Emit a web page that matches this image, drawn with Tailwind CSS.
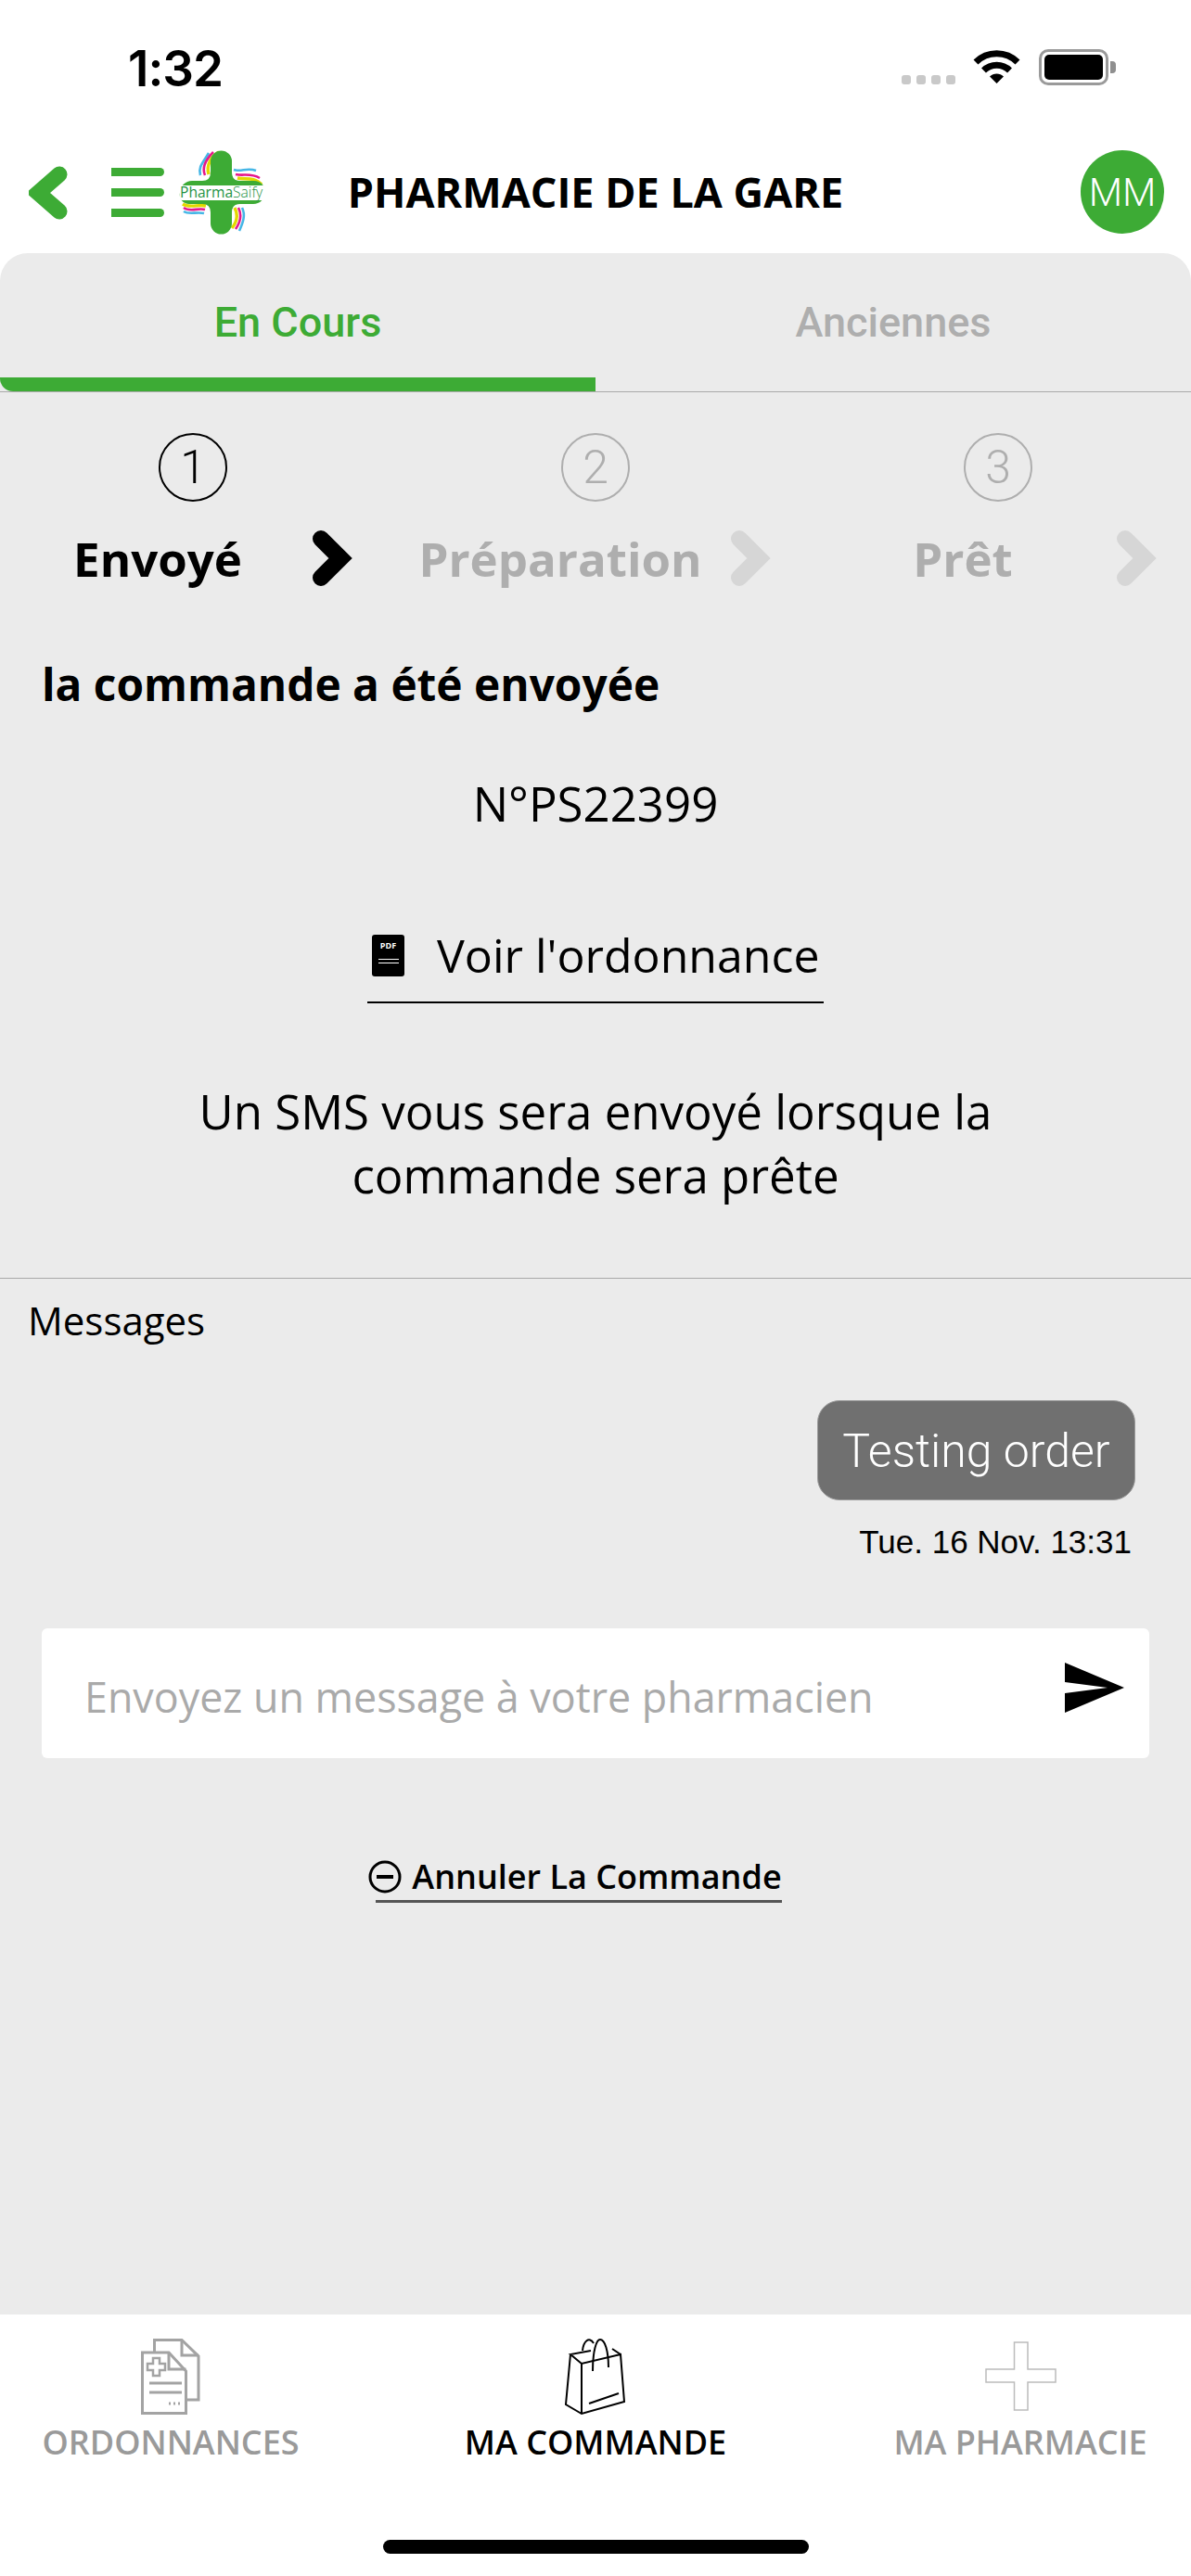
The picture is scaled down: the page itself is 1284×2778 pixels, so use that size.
<!DOCTYPE html>
<html lang="fr">
  <head>
    <meta charset="UTF-8" />
    <meta name="viewport" content="width=device-width, initial-scale=1.0" />
    <title>PharmaSaify - Ma commande</title>
    <script src="https://cdn.jsdelivr.net/npm/@tailwindcss/browser@4"></script>
  </head>
  <body class="bg-white font-['Open_Sans',sans-serif] text-black">
    <div class="flex flex-col w-[1284px] h-[2778px] overflow-hidden">
      <!-- Status bar -->
      <div class="flex items-start justify-between h-[162px] pl-[138px] pr-[81px] pt-[43px] shrink-0">
        <span class="font-['Inter',sans-serif] font-semibold text-[53px] leading-[62px] tracking-[-1px]">1:32</span>
        <div class="flex items-start pt-[10px]">
          <div class="flex gap-[6px] mt-[28px]">
            <span class="w-[10px] h-[10px] rounded-[3px] bg-[#c9c9c9]"></span>
            <span class="w-[10px] h-[10px] rounded-[3px] bg-[#c9c9c9]"></span>
            <span class="w-[10px] h-[10px] rounded-[3px] bg-[#c9c9c9]"></span>
            <span class="w-[10px] h-[10px] rounded-[3px] bg-[#c9c9c9]"></span>
          </div>
          <svg class="ml-[19px]" width="51" height="38" viewBox="0 0 51 38" fill="none" stroke="#000" stroke-width="7">
            <path d="M3 14 A32 32 0 0 1 48 14" />
            <path d="M11.5 23 A20 20 0 0 1 39.5 23" />
            <path d="M18 29.5 L25.5 37 L33 29.5 A10.6 10.6 0 0 0 18 29.5 Z" fill="#000" stroke="none" />
          </svg>
          <div class="flex items-center ml-[20px]">
            <div class="w-[75px] h-[39px] rounded-[10px] border-[3px] border-[#9a9a9a] p-[3px]">
              <div class="w-full h-full rounded-[5px] bg-black"></div>
            </div>
            <span class="w-[6px] h-[13px] ml-[2px] rounded-r-[4px] bg-[#8f8f8f]"></span>
          </div>
        </div>
      </div>

      <!-- Header -->
      <header class="relative flex items-center h-[111px] pl-[31px] shrink-0">
        <svg width="42" height="58" viewBox="0 0 42 58" fill="none" class="-mt-[20px]">
          <path d="M33 9 L10 29 L33 49" stroke="#3dab35" stroke-width="17" stroke-linecap="round" stroke-linejoin="miter" />
        </svg>
        <div class="flex flex-col gap-[13px] w-[57px] ml-[47px] -mt-[20px]">
          <span class="h-[9px] rounded-r-full bg-[#3dab35]"></span>
          <span class="h-[9px] rounded-r-full bg-[#3dab35]"></span>
          <span class="h-[9px] rounded-r-full bg-[#3dab35]"></span>
        </div>
        <svg class="ml-[15px] -mt-[20px]" width="96" height="92" viewBox="0 0 96 92" fill="none">
          <g stroke-width="2.6" fill="none">
            <path d="M24 27 C21 18 28 12 33 3" stroke="#45b6e6" />
            <path d="M29 27 C25 18 31 9 38 2" stroke="#e5178c" />
            <path d="M33 26 C30 16 36 6 44 2" stroke="#e2d900" stroke-width="3.4" />
            <path d="M60 21 C68 24 74 18 84 22" stroke="#45b6e6" />
            <path d="M62 26 C70 28 78 24 88 30" stroke="#e5178c" />
            <path d="M64 30 C72 32 82 28 90 37" stroke="#e2d900" stroke-width="3.4" />
            <path d="M6 66 C12 70 20 66 28 68" stroke="#45b6e6" />
            <path d="M6 62 C12 67 22 62 29 64" stroke="#e5178c" />
            <path d="M5 58 C12 63 22 58 30 60" stroke="#e2d900" stroke-width="3.4" />
            <path d="M69 62 C73 70 70 78 66 87" stroke="#45b6e6" />
            <path d="M65 62 C69 70 67 78 62 85" stroke="#e5178c" />
            <path d="M61 62 C65 70 63 78 58 84" stroke="#e2d900" stroke-width="3.4" />
          </g>
          <path d="M35 12 A11.5 11.5 0 0 1 58 12 V24 Q58 33 67 33 H82 A12 12 0 0 1 94 45 A13 13 0 0 1 81 58 H67 Q58 58 58 67 V79 A11.5 11.5 0 0 1 35 79 V67 Q35 58 26 58 H12 A10 10 0 0 1 2 46 A13 13 0 0 1 15 33 H26 Q35 33 35 24 Z" fill="#3dab35" />
          <rect x="2" y="38" width="92" height="16" rx="2" fill="#fff" />
          <text x="2" y="50.5" font-family="Open Sans" font-size="15.6" fill="#1f9345" font-weight="500">Pharma<tspan font-weight="300">Saify</tspan></text>
        </svg>
        <h1 class="absolute left-0 right-0 top-[15px] text-center text-[45px] leading-[60px] font-bold">PHARMACIE DE LA GARE</h1>
        <div class="absolute left-[1165px] top-0 flex items-center justify-center w-[90px] h-[90px] rounded-full bg-[#3dab35] font-['Roboto',sans-serif] font-light text-[42px] text-white">MM</div>
      </header>

      <!-- Main -->
      <main class="flex-1 flex flex-col bg-[#ebebeb] rounded-t-[30px]">
        <!-- Tabs -->
        <div class="flex h-[150px] border-b border-[#a9a9a9] shrink-0 font-['Roboto',sans-serif] font-medium text-[45px]">
          <div class="flex-1 flex flex-col">
            <div class="flex-1 flex items-center justify-center pt-[16px] text-[#3dab35]">En Cours</div>
            <div class="h-[15px] rounded-bl-[14px] bg-[#3dab35]"></div>
          </div>
          <div class="flex-1 flex items-center justify-center pt-[16px] pb-[15px] text-[#aeaeae]">Anciennes</div>
        </div>

        <!-- Steps -->
        <div class="flex justify-center pt-[44px] shrink-0 font-bold text-[51px] leading-[64px]">
          <div class="w-[434px] shrink-0">
            <div class="mx-auto flex items-center justify-center w-[74px] h-[74px] rounded-full border-2 border-black font-['Roboto',sans-serif] font-light text-[50px]">1</div>
            <div class="flex items-center mt-[29px]">
              <span class="w-[340px] ml-[9px] text-center shrink-0">Envoyé</span>
              <svg class="-ml-[6px] shrink-0" width="46" height="60" viewBox="0 0 46 60" fill="none"><path d="M12 9 L33 30 L12 51" stroke="#000" stroke-width="18" stroke-linecap="round" /></svg>
            </div>
          </div>
          <div class="w-[434px] shrink-0 text-[#aeaeae]">
            <div class="mx-auto flex items-center justify-center w-[74px] h-[74px] rounded-full border-2 border-[#aeaeae] font-['Roboto',sans-serif] font-light text-[50px]">2</div>
            <div class="flex items-center mt-[29px]">
              <span class="w-[340px] ml-[9px] text-center shrink-0">Préparation</span>
              <svg class="ml-[11px] shrink-0" width="46" height="60" viewBox="0 0 46 60" fill="none"><path d="M12 9 L33 30 L12 51" stroke="#d6d6d6" stroke-width="18" stroke-linecap="round" /></svg>
            </div>
          </div>
          <div class="w-[434px] shrink-0 text-[#aeaeae]">
            <div class="mx-auto flex items-center justify-center w-[74px] h-[74px] rounded-full border-2 border-[#aeaeae] font-['Roboto',sans-serif] font-light text-[50px]">3</div>
            <div class="flex items-center mt-[29px]">
              <span class="w-[340px] ml-[9px] text-center shrink-0">Prêt</span>
              <svg class="-ml-[7px] shrink-0" width="46" height="60" viewBox="0 0 46 60" fill="none"><path d="M12 9 L33 30 L12 51" stroke="#d6d6d6" stroke-width="18" stroke-linecap="round" /></svg>
            </div>
          </div>
        </div>

        <!-- Order status -->
        <p class="pl-[45px] mt-[73px] font-bold text-[47.8px] leading-[62px]">la commande a été envoyée</p>
        <p class="mt-[66px] text-center text-[51px] leading-[62px]">N°PS22399</p>
        <div class="flex justify-center mt-[86px]">
          <a class="flex items-center w-[492px] h-[99px] pb-[2px] pl-[5px] border-b-2 border-black text-[50px]">
            <span class="flex flex-col items-center w-[35px] h-[45px] rounded-[3px] bg-black text-white">
              <span class="mt-[6px] font-bold text-[9px] leading-[12px]">PDF</span>
              <span class="mt-[8px] w-[22px] h-[1px] bg-white"></span>
              <span class="mt-[3px] w-[22px] h-[1px] bg-white"></span>
            </span>
            <span class="ml-[35px]">Voir l'ordonnance</span>
          </a>
        </div>
        <p class="mt-[82px] text-center text-[51px] leading-[69px]">Un SMS vous sera envoyé lorsque la<br />commande sera prête</p>

        <!-- Messages -->
        <div class="mt-[76px] pt-[18px] border-t border-[#a9a9a9] flex-1 flex flex-col">
          <p class="pl-[30px] text-[42px] leading-[54px]">Messages</p>
          <div class="flex justify-end mt-[59px] pr-[60px]">
            <div class="flex items-center justify-center w-[343px] h-[108px] pt-[2px] rounded-[24px] border border-[#9b9b9b] bg-[#707070] font-['Roboto',sans-serif] font-light text-[50px] text-white">Testing order</div>
          </div>
          <p class="mt-[24px] pr-[64px] text-right font-['Liberation_Sans',sans-serif] text-[35px] leading-[42px]">Tue. 16 Nov. 13:31</p>
          <form class="flex items-center justify-between w-[1194px] h-[140px] ml-[45px] mt-[72px] pl-[46px] pr-[27px] rounded-[6px] bg-white">
            <input type="text" placeholder="Envoyez un message à votre pharmacien" class="flex-1 mt-[8px] text-[44.8px] outline-none placeholder:text-[#aaaaaa]" />
            <svg class="-mt-[13px]" width="64" height="54" viewBox="0 0 64 54"><path d="M0 0 L64 27 L0 54 V33 L46 27 L0 21 Z" fill="#000" /></svg>
          </form>
          <div class="flex justify-center mt-[102px]">
            <a class="flex items-center h-[54px] border-b-[3px] border-[#555] -ml-[36px] text-[36px] font-semibold">
              <svg class="-ml-[8px] shrink-0" width="36" height="36" viewBox="0 0 36 36" fill="none" stroke="#000" stroke-width="3"><circle cx="18" cy="18" r="16" /><path d="M9 18 H27" stroke-width="4" /></svg>
              <span class="ml-[11px]">Annuler La Commande</span>
            </a>
          </div>
        </div>
      </main>

      <!-- Bottom nav -->
      <nav class="flex justify-center h-[282px] pt-[26px] shrink-0 text-[36px] font-semibold leading-[48px]">
        <a class="flex flex-col items-center w-[458px] shrink-0 text-[#9a9a9a]">
          <svg width="64" height="82" viewBox="0 0 64 82" fill="none" stroke="#a3a3a3" stroke-width="3">
            <path d="M14.5 14 V1.5 H44 L62 19 V66 H50" />
            <path d="M44 1.5 V18 H62" />
            <path d="M1.5 15 H30 L48.5 35 V80.5 H1.5 Z" />
            <path d="M30 15 V33 H48.5" />
            <path d="M13 21 H20 V27 H26 V34 H20 V40 H13 V34 H7 V27 H13 Z" stroke-width="2.5" />
            <path d="M9 48 H44 M9 58 H44" />
            <path d="M30 70 H44" stroke-dasharray="2 3" />
          </svg>
          <span class="mt-[6px]">ORDONNANCES</span>
        </a>
        <a class="flex flex-col items-center w-[458px] shrink-0">
          <svg width="68" height="86" viewBox="0 0 68 86" fill="none" stroke="#000" stroke-width="2" class="-mt-[2px]">
            <path d="M7 19 L2 73 L19 83 L65 70 L61 19 L19 29 L7 19 L29 15" />
            <path d="M52 13 L61 19" />
            <path d="M19 29 V83" />
            <path d="M20 15 C21 5 27 -1 32 7" />
            <path d="M31 37 C31 15 35 3 39 3 C44 3 48 15 48 33" />
            <path d="M27 72 L59 61" />
          </svg>
          <span class="mt-[4px]">MA COMMANDE</span>
        </a>
        <a class="flex flex-col items-center w-[458px] shrink-0 text-[#9a9a9a]">
          <svg class="mt-[3px]" width="77" height="75" viewBox="0 0 77 75" fill="none" stroke="#bcbcbc" stroke-width="1.5">
            <path d="M31.5 1 H46 V30 H76 V44 H46 V74 H31.5 V44 H1 V30 H31.5 Z" />
          </svg>
          <span class="mt-[10px]">MA PHARMACIE</span>
        </a>
      </nav>
    </div>
    <!-- Home indicator -->
    <div class="absolute left-[413px] top-[2739px] w-[459px] h-[15px] rounded-full bg-black"></div>
  </body>
</html>
